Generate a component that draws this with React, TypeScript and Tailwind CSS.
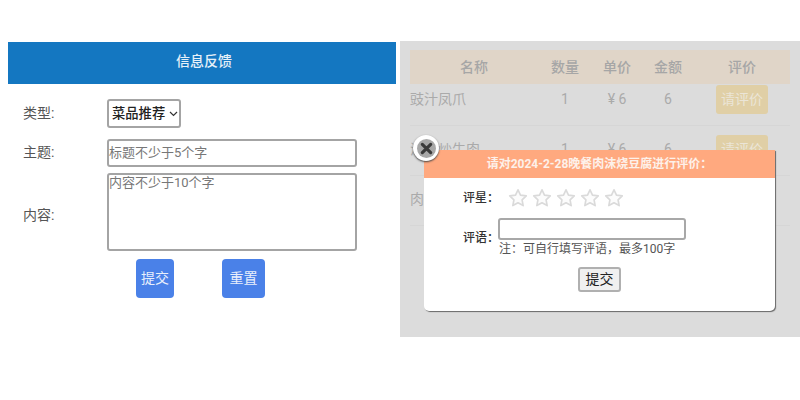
const CJK = "font-['Roboto','Noto_Sans_CJK_SC',sans-serif]";

function Star() {
  return (
    <svg width="20" height="20" viewBox="0 0 24 24" className="block">
      <path
        d="M12 2.2l3 6.3 6.9.9-5 4.8 1.3 6.9-6.2-3.4-6.2 3.4 1.3-6.9-5-4.8 6.9-.9z"
        fill="#fcfcfc"
        stroke="#dadada"
        strokeWidth="2"
        strokeLinejoin="round"
      />
    </svg>
  );
}

function Row({ name, first, faded }: { name: string; first?: boolean; faded?: boolean }) {
  return (
    <div
      className={
        first
          ? "grid h-[42px] grid-cols-[128px_54px_50px_52px_96px] border-b border-[#d6d6d6] pt-px text-[14px] text-[#aaaaaa]"
          : "grid h-[50px] grid-cols-[128px_54px_50px_52px_96px] border-b border-[#d6d6d6] pt-[9px] text-[14px] text-[#aaaaaa]"
      }
    >
      <div className="flex h-[29px] items-center">{name}</div>
      <div className="flex h-[29px] items-center justify-center">1</div>
      <div className="flex h-[29px] items-center justify-center">¥ 6</div>
      <div className="flex h-[29px] items-center justify-center">6</div>
      <div className="flex justify-center">
        {!faded && (
          <div className="flex h-[29px] w-[52px] items-center justify-center rounded-[3px] bg-[#e0cfa6] text-[#ebe5d7]">
            请评价
          </div>
        )}
      </div>
    </div>
  );
}

export default function App() {
  return (
    <div className={`flex h-[400px] w-[800px] overflow-hidden bg-white ${CJK}`}>
      <div className="w-[400px] pl-2 pr-1 pt-[42px]">
        <div className="flex h-[42px] items-center justify-center pl-[4px] pb-[3px] text-[14px] font-medium text-[#e6f0f8] bg-[#1477c1]">
          信息反馈
        </div>
        <div className="grid grid-cols-[84px_250px] items-center gap-y-[6px] pl-[15px] pt-[15px] text-[14px] text-[#555]">
          <div>类型:</div>
          <div>
            <div className="flex h-[29px] w-[74px] items-center gap-[4px] rounded-[3px] border-2 border-[#a4a4a4] pl-[3px] text-[13.3px] font-medium text-[#222]">
              菜品推荐
              <svg width="9" height="6" viewBox="0 0 9 6">
                <path d="M1 1l3.5 3.5L8 1" fill="none" stroke="#333" strokeWidth="1.2" />
              </svg>
            </div>
          </div>
          <div className="mt-[3px]">主题:</div>
          <div className="mt-[5px] flex h-[28px] items-center rounded-[3px] border-2 border-[#a4a4a4] text-[13px] text-[#777]">
            标题不少于5个字
          </div>
          <div className="mt-[6px]">内容:</div>
          <div className="h-[78px] rounded-[3px] border-2 border-[#a4a4a4] text-[13px] leading-[16px] text-[#777]">
            内容不少于10个字
          </div>
        </div>
        <div className="flex gap-[48px] pl-[128px] pt-2 text-[14px] text-[#e8effc]">
          <div className="flex h-[39px] w-[38px] items-center justify-center rounded-[4px] bg-[#4a81e8]">提交</div>
          <div className="flex h-[39px] w-[43px] items-center justify-center rounded-[4px] bg-[#4a81e8]">重置</div>
        </div>
      </div>

      <div className="relative mt-[41px] h-[296px] w-[400px] bg-[#dcdcdc] px-[10px] pt-[9px]">
        <div className="grid h-[34px] grid-cols-[128px_54px_50px_52px_96px] items-center bg-[#e0d5c8] text-center text-[14px] font-medium text-[#a6a6a6]">
          <div>名称</div>
          <div>数量</div>
          <div>单价</div>
          <div>金额</div>
          <div>评价</div>
        </div>
        <Row name="豉汁凤爪" first />
        <Row name="沫汁炒牛肉" />
        <Row name="肉" faded />

        <div className="absolute left-[24px] top-[109px] h-[161px] w-[351px] rounded-b-[5px] bg-white shadow-[1px_1px_1px_#666]">
          <div className="flex h-[28px] items-center justify-center bg-[#ffa97f] text-[12px] font-bold text-[#fdf1ea]">
            请对2024-2-28晚餐肉沫烧豆腐进行评价：
          </div>
          <div className="flex items-center pl-[39px] pt-[10px] text-[12px] font-medium text-[#333]">
            <div className="w-[45px] whitespace-nowrap">评星：</div>
            <div className="flex gap-[4px]">
              <Star />
              <Star />
              <Star />
              <Star />
              <Star />
            </div>
          </div>
          <div className="flex pl-[39px] pt-[10px]">
            <div className="w-[35px] whitespace-nowrap pt-[11px] text-[12px] font-medium text-[#333]">评语：</div>
            <div>
              <div className="h-[22px] w-[188px] rounded-[3px] border-2 border-[#a8a8a8]" />
              <div className="pl-[1px] pt-[1px] text-[12px] leading-[16px] text-[#555]">注：可自行填写评语，最多100字</div>
            </div>
          </div>
          <div className="flex justify-center pt-[10px]">
            <div className="flex h-[25px] w-[43px] items-center justify-center rounded-[3px] border-2 border-[#b0b0b0] bg-[#f0f0f0] text-[14px] text-[#222]">
              提交
            </div>
          </div>
        </div>

        <div className="absolute left-[13px] top-[94px] flex h-[26px] w-[26px] items-center justify-center rounded-full bg-white shadow-[0_1px_2px_#444]">
          <div className="flex h-[19px] w-[19px] items-center justify-center rounded-full bg-[#a8a8a8]">
            <svg width="13" height="13" viewBox="0 0 14 14">
              <path d="M2.5 2.5l9 9M11.5 2.5l-9 9" stroke="#3a3a3a" strokeWidth="3.4" strokeLinecap="round" />
            </svg>
          </div>
        </div>
      </div>
    </div>
  );
}
